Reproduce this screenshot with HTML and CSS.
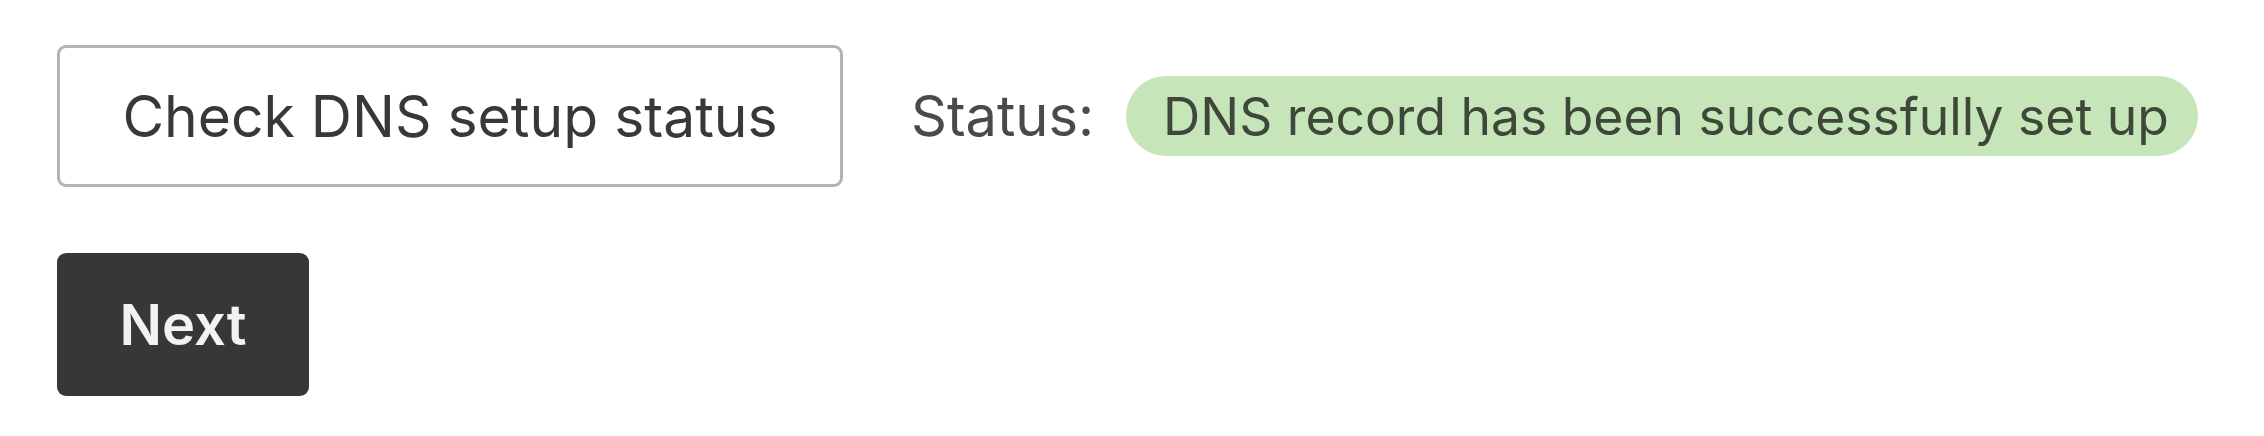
FILE: index.html
```html
<!DOCTYPE html>
<html lang="en">
<head>
<meta charset="utf-8">
<title>DNS setup</title>
<link rel="stylesheet" href="styles.css">
</head>
<body>
<div class="page">
  <div class="row">
    <button class="btn btn-outline" type="button">Check DNS setup status</button>
    <div class="status">
      <span class="status-label">Status:</span>
      <span class="pill">DNS record has been successfully set up</span>
    </div>
  </div>
  <div class="row">
    <button class="btn btn-primary" type="button">Next</button>
  </div>
</div>
</body>
</html>
```

FILE: styles.css
```css
html, body {
  margin: 0;
  padding: 0;
  background: #ffffff;
}

body {
  font-family: Inter, "Noto Sans", "Liberation Sans", sans-serif;
  color: #3a3a3a;
}

.page {
  padding: 45px 0 0 57px;
  display: flex;
  flex-direction: column;
  gap: 66px;
}

.row {
  display: flex;
  align-items: center;
}

.btn {
  font-family: inherit;
  line-height: 1;
  border-radius: 9px;
  cursor: pointer;
  box-sizing: border-box;
}

.btn-outline {
  height: 142px;
  width: 786px;
  padding: 0;
  background: #ffffff;
  border: 3px solid #b3b3b3;
  color: #383838;
  font-size: 57px;
  font-weight: 400;
}

.btn-primary {
  height: 143px;
  width: 252px;
  padding: 0;
  background: #373737;
  border: none;
  color: #f2f2f2;
  font-size: 56px;
  font-weight: 600;
}

.status {
  display: flex;
  align-items: center;
  margin-left: 68px;
  gap: 32px;
}

.status-label {
  font-size: 56px;
  color: #4a4a4a;
}

.pill {
  display: inline-flex;
  align-items: center;
  height: 80px;
  padding: 0 29px 0 37px;
  border-radius: 40px;
  background: #c6e5b8;
  color: #3e473a;
  font-size: 51.6px;
}
```
